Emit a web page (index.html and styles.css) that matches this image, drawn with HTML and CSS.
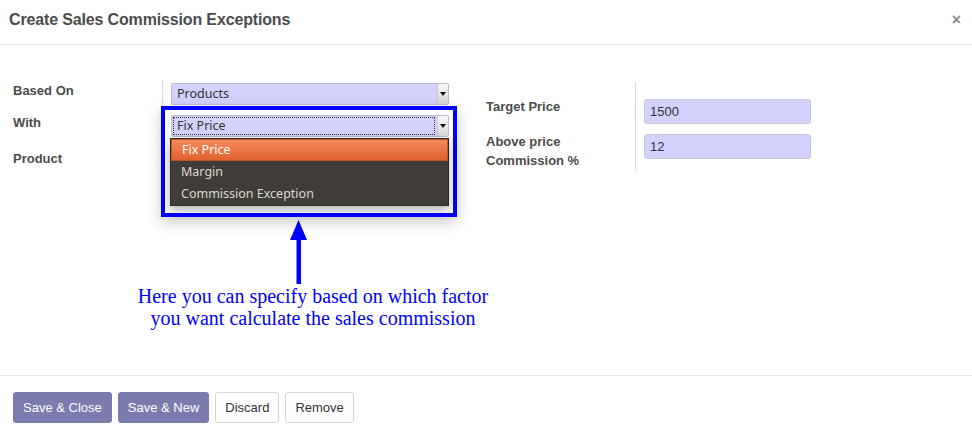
FILE: index.html
```html
<!DOCTYPE html>
<html lang="en">
<head>
<meta charset="utf-8">
<title>Create Sales Commission Exceptions</title>
<link rel="stylesheet" href="styles.css">
</head>
<body>
<div class="modal">
  <header class="modal-header">
    <h4 class="modal-title">Create Sales Commission Exceptions</h4>
    <span class="close">×</span>
  </header>

  <main class="modal-body">
    <div class="groups">
      <div class="group group-left">
        <div class="labels">
          <div class="label label-based">Based On</div>
          <div class="label label-with">With</div>
          <div class="label label-product">Product</div>
        </div>
        <div class="fields">
          <div class="select">
            <span class="select-value">Products</span>
            <span class="select-btn"><span class="caret"></span></span>
          </div>
          <div class="select select-focus">
            <span class="select-value">Fix Price</span>
            <span class="select-btn"><span class="caret"></span></span>
          </div>
          <div class="input-plain"></div>
        </div>
      </div>

      <div class="group group-right">
        <div class="labels labels-right">
          <div class="label">Target Price</div>
          <div class="label label-multi">Above price<br>Commission %</div>
        </div>
        <div class="fields fields-right">
          <div class="input">1500</div>
          <div class="input">12</div>
        </div>
      </div>
    </div>

    <div class="annotation">
      <svg class="arrow" width="17" height="64" viewBox="0 0 17 64">
        <polygon points="8.5,0 17,20 0,20" fill="#0000ff"/>
        <rect x="6.5" y="18" width="4.5" height="46" fill="#0000ff"/>
      </svg>
      <p class="note">Here you can specify based on which factor<br>you want calculate the sales commission</p>
    </div>

    <div class="callout"></div>
    <ul class="dropdown">
      <li class="option active">Fix Price</li>
      <li class="option">Margin</li>
      <li class="option">Commission Exception</li>
    </ul>
  </main>

  <footer class="modal-footer">
    <button class="btn btn-primary">Save &amp; Close</button>
    <button class="btn btn-primary">Save &amp; New</button>
    <button class="btn btn-default">Discard</button>
    <button class="btn btn-default">Remove</button>
  </footer>
</div>
</body>
</html>
```

FILE: styles.css
```css
* { box-sizing: border-box; }

html, body {
  margin: 0;
  padding: 0;
  background: #fff;
}

body {
  font-family: "Liberation Sans", Arial, sans-serif;
  font-size: 13px;
  color: #333;
}

.modal {
  position: relative;
  width: 972px;
  height: 442px;
  background: #fff;
}

/* header */
.modal-header {
  height: 45px;
  padding: 10px 9px;
  border-bottom: 1px solid #e5e5e5;
  display: flex;
  justify-content: space-between;
  align-items: flex-start;
}

.modal-title {
  margin: 0;
  font-size: 16px;
  line-height: 20px;
  font-weight: bold;
  color: #4c4c4c;
  letter-spacing: -0.15px;
}

.close {
  font-size: 16px;
  line-height: 20px;
  font-weight: bold;
  color: #8a8a8a;
  margin-right: 2px;
}

/* body */
.modal-body {
  height: 331px;
  padding: 35px 0 0 13px;
  border-bottom: 1px solid #e5e5e5;
}

.groups {
  display: flex;
  align-items: flex-start;
}

.group {
  display: flex;
  align-items: flex-start;
}

.group-left {
  width: 473px;
}

.labels {
  width: 149px;
  display: flex;
  flex-direction: column;
}

.label {
  font-weight: bold;
  color: #4c4c4c;
  line-height: 18px;
}

.label-based { margin-top: 1.5px; }
.label-with { margin-top: 14px; }
.label-product { margin-top: 18px; }

.fields {
  border-left: 1px solid #dcdcdc;
  padding: 3px 0 4px 8px;
  display: flex;
  flex-direction: column;
}

.select {
  width: 278px;
  height: 22px;
  display: flex;
  background: #d2d2fd;
  border: 1px solid #bcbcd0;
  border-radius: 2px;
  font-family: "Noto Sans", "DejaVu Sans", sans-serif;
  font-size: 12.5px;
  color: #333;
}

.select + .select { margin-top: 10px; }

.select-value {
  flex: 1;
  padding-left: 5px;
  line-height: 20px;
}

.select-focus .select-value {
  outline: 1px dotted #333;
  outline-offset: -2px;
  padding-left: 5px;
  margin-right: 1px;
}

.select-btn {
  width: 11px;
  background: linear-gradient(#f7f7f7, #d8d8d8);
  border-left: 1px solid #c8c8c8;
  display: flex;
  align-items: center;
  justify-content: center;
}

.caret {
  width: 0;
  height: 0;
  border-left: 3px solid transparent;
  border-right: 3px solid transparent;
  border-top: 4px solid #111;
}

.input-plain {
  width: 278px;
  height: 24px;
  margin-top: 13px;
  border: 1px solid #c8c8c8;
  border-radius: 3px;
  background: #fff;
}

/* right group */
.labels-right {
  padding-top: 18px;
}

.label-multi {
  margin-top: 16px;
  line-height: 19px;
}

.fields-right {
  padding: 17px 0 12px 8px;
  margin-top: 2px;
}

.input {
  width: 167px;
  height: 25px;
  padding: 0 5px;
  line-height: 23px;
  background: #d2d2fd;
  border: 1px solid #c8c8d8;
  border-radius: 3px;
  color: #333;
}

.input + .input { margin-top: 10px; }

/* annotation */
.annotation {
  width: 400px;
  margin: 42px 0 0 100px;
  display: flex;
  flex-direction: column;
}

.arrow {
  display: block;
  margin-left: 177px;
}

.note {
  margin: 1px 0 0;
  text-align: center;
  font-family: "Liberation Serif", "Times New Roman", serif;
  font-size: 20px;
  line-height: 22px;
  color: #0000ff;
}

/* callout overlay */
.callout {
  position: absolute;
  left: 161px;
  top: 106px;
  width: 296px;
  height: 111px;
  border: 4px solid #0000ff;
  box-shadow: 0 5px 14px rgba(0, 0, 0, 0.22);
}

.dropdown {
  position: absolute;
  left: 170px;
  top: 138px;
  width: 279px;
  height: 68px;
  margin: 0;
  padding: 0;
  list-style: none;
  background: #403d38;
  border: 1px solid #2c2a27;
  box-shadow: 0 4px 10px rgba(0, 0, 0, 0.3);
  font-family: "Noto Sans", "DejaVu Sans", sans-serif;
  font-size: 12.5px;
  color: #dcd8cf;
}

.option {
  height: 22px;
  line-height: 22px;
  padding-left: 10px;
}

.option.active {
  background: linear-gradient(#f48b5c, #e0612f);
  border: 1px solid #c4541f;
  line-height: 20px;
  color: #fff;
}

/* footer */
.modal-footer {
  padding: 16px 13px;
  display: flex;
  gap: 6px;
}

.btn {
  height: 31px;
  padding: 0 9px;
  border-radius: 3px;
  font-family: "Liberation Sans", Arial, sans-serif;
  font-size: 13px;
  line-height: 29px;
  cursor: pointer;
}

.btn-primary {
  background: #7c7bad;
  border: 1px solid #7c7bad;
  color: #fff;
}

.btn-default {
  background: #fff;
  border: 1px solid #d6d6d6;
  color: #333;
}
```
